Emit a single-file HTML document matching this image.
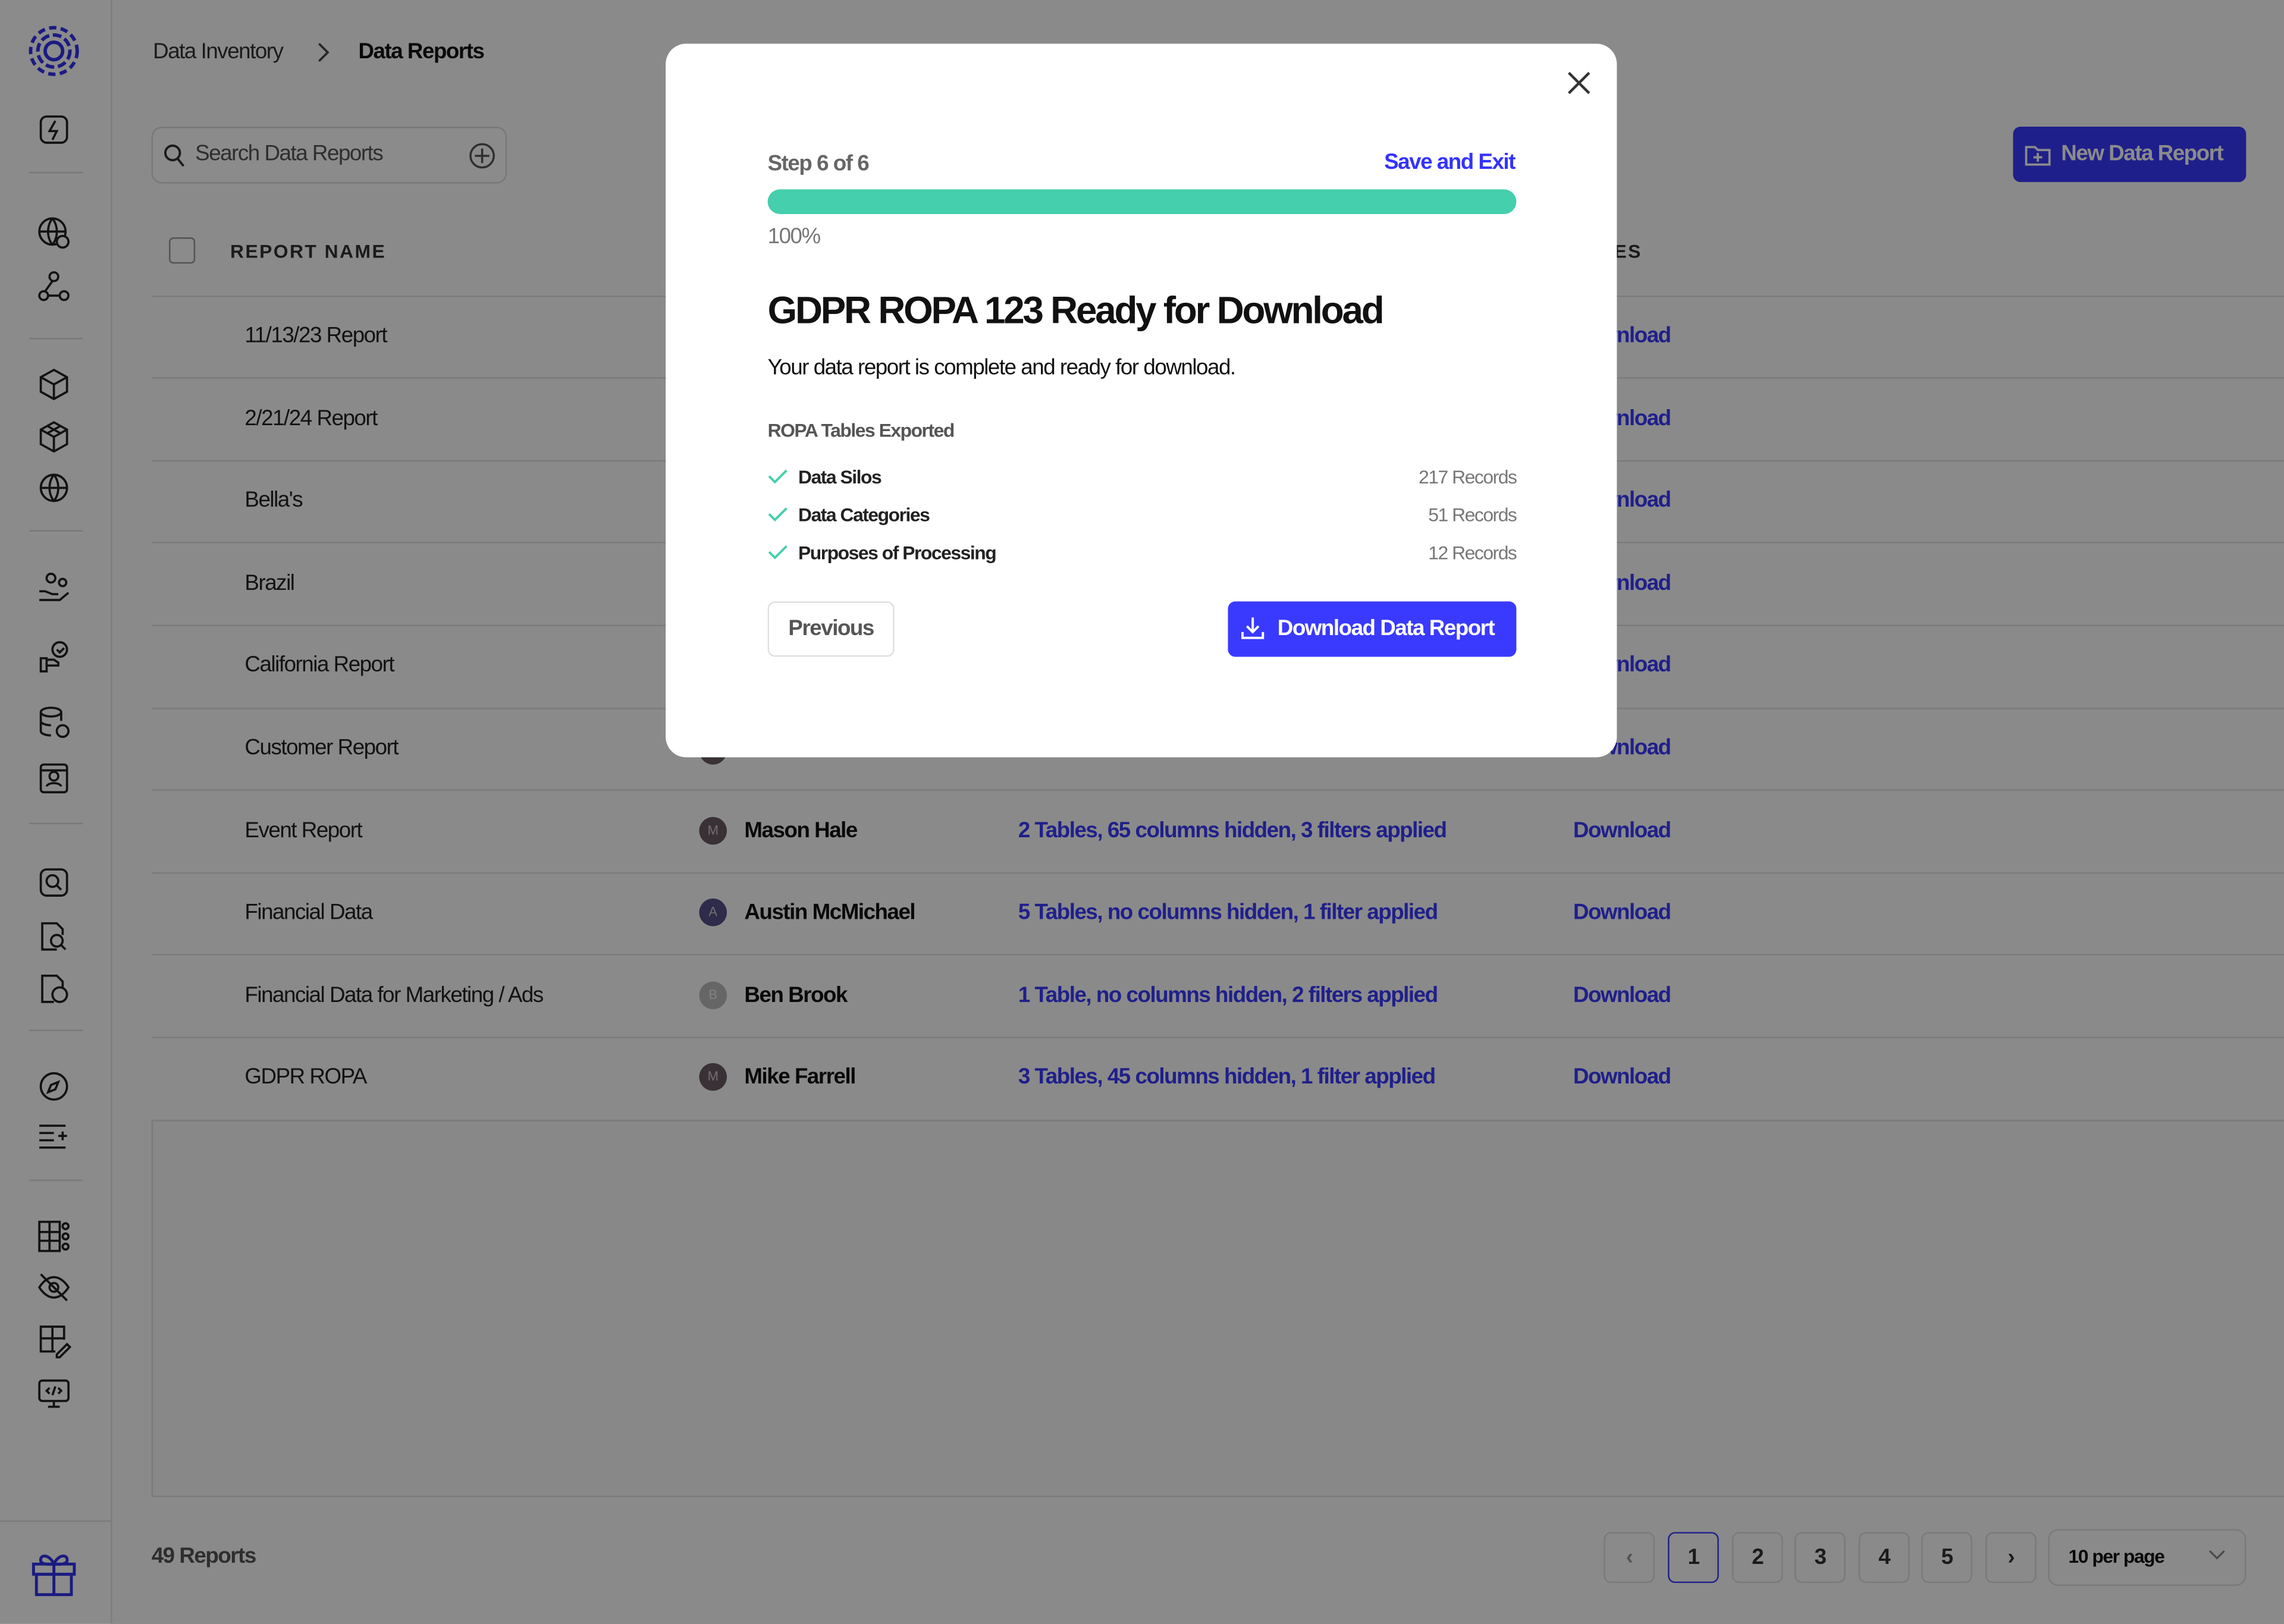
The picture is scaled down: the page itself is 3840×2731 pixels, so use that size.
<!DOCTYPE html>
<html><head><meta charset="utf-8"><style>
*{box-sizing:border-box;margin:0;padding:0}
html,body{width:3840px;height:2731px;overflow:hidden;background:#8a8a8a}
#w{position:absolute;left:0;top:0;width:1568px;height:1115px;transform:scale(2.44898);transform-origin:0 0;font-family:"Liberation Sans",sans-serif;letter-spacing:-0.6px}
.page{position:absolute;inset:0;background:#fdfdfd}
.side{position:absolute;left:0;top:0;width:77px;height:1115px;background:#fff;border-right:1px solid #e4e4e4}
.side svg{position:absolute;left:24px}
.sep{position:absolute;left:20px;width:37px;height:1px;background:#ddd}
.a{position:absolute;white-space:nowrap}
.row{position:absolute;left:104px;width:1464px;height:1px;background:#e2e2e2}
.name{position:absolute;left:168px;font-size:15px;color:#222}
.av{position:absolute;left:480px;width:19px;height:19px;border-radius:50%;background:#6a5a62;color:#ccc;font-size:9px;text-align:center;line-height:19px;letter-spacing:0}
.own{position:absolute;left:511px;font-size:15px;font-weight:bold;color:#111}
.tb{position:absolute;left:699px;font-size:15px;font-weight:bold;color:#3a3aff}
.dl{position:absolute;left:1080px;font-size:15px;font-weight:bold;color:#3a3aff}
.ov{position:absolute;inset:0;background:rgba(0,0,0,0.455)}
.modal{position:absolute;left:457px;top:30px;width:653px;height:490px;background:#fff;border-radius:14px}
.pg{position:absolute;top:1052px;width:35px;height:35px;border:1px solid #e0e0e0;border-radius:5px;font-size:15px;font-weight:bold;text-align:center;line-height:33px;color:#333}
</style></head><body><div id="w">
<div class="page">
 <div class="side">
  <svg style="top:17px;left:19px" width="36" height="36" viewBox="0 0 36 36" fill="none" stroke="#3333ee" stroke-width="2.4"><circle cx="18" cy="18" r="16" stroke-dasharray="5 3"/><circle cx="18" cy="18" r="11" stroke-dasharray="6 2.5"/><circle cx="18" cy="18" r="6"/></svg>
  <svg style="top:76px" width="26" height="26" viewBox="0 0 26 26" fill="none" stroke="#222" stroke-width="1.5"><rect x="4" y="4" width="18" height="18" rx="4"/><path d="M14 7l-4 7h5l-3 6"/></svg>
  <div class="sep" style="top:118px"></div>
  <svg style="top:147px" width="26" height="26" viewBox="0 0 26 26" fill="none" stroke="#222" stroke-width="1.5"><circle cx="12" cy="12" r="9"/><path d="M3 12h18M12 3c-4 5-4 13 0 18M12 3c4 5 4 13 0 18"/><circle cx="19" cy="19" r="4" fill="#fff"/></svg>
  <svg style="top:184px" width="26" height="26" viewBox="0 0 26 26" fill="none" stroke="#222" stroke-width="1.5"><circle cx="13" cy="6" r="3"/><circle cx="6" cy="19" r="3"/><circle cx="20" cy="19" r="3"/><path d="M12 9l-5 7M9 19h8"/></svg>
  <div class="sep" style="top:232px"></div>
  <svg style="top:251px" width="26" height="26" viewBox="0 0 26 26" fill="none" stroke="#222" stroke-width="1.5"><path d="M13 3l9 5v10l-9 5-9-5V8zM4 8l9 5 9-5M13 13v10"/></svg>
  <svg style="top:287px" width="26" height="26" viewBox="0 0 26 26" fill="none" stroke="#222" stroke-width="1.5"><path d="M13 3l9 5v10l-9 5-9-5V8zM4 8l9 5 9-5M13 13v10M8.5 5.5l9 5M17.5 5.5l-9 5"/></svg>
  <svg style="top:322px" width="26" height="26" viewBox="0 0 26 26" fill="none" stroke="#222" stroke-width="1.5"><circle cx="13" cy="13" r="9"/><path d="M4 13h18M13 4c-4 5-4 13 0 18M13 4c4 5 4 13 0 18"/></svg>
  <div class="sep" style="top:364px"></div>
  <svg style="top:391px" width="26" height="26" viewBox="0 0 26 26" fill="none" stroke="#222" stroke-width="1.5"><circle cx="11" cy="6" r="3"/><circle cx="19" cy="9" r="2.5"/><path d="M3 15h4l5 2h4M3 21h14l6-5"/></svg>
  <svg style="top:438px" width="26" height="26" viewBox="0 0 26 26" fill="none" stroke="#222" stroke-width="1.5"><circle cx="17" cy="8" r="5"/><path d="M15 8l2 2 3-3M4 14h4v9H4zM8 15h5l3 2v2H8"/></svg>
  <svg style="top:483px" width="26" height="26" viewBox="0 0 26 26" fill="none" stroke="#222" stroke-width="1.5"><ellipse cx="11" cy="6" rx="7" ry="3"/><path d="M4 6v13c0 2 4 3 7 3M18 6v6M4 12c0 2 4 3 7 3"/><circle cx="19" cy="19" r="4"/></svg>
  <svg style="top:521px" width="26" height="26" viewBox="0 0 26 26" fill="none" stroke="#222" stroke-width="1.5"><rect x="4" y="4" width="18" height="19" rx="2"/><circle cx="13" cy="12" r="3"/><path d="M8 19c1-3 9-3 10 0M4 8h18"/></svg>
  <div class="sep" style="top:565px"></div>
  <svg style="top:593px" width="26" height="26" viewBox="0 0 26 26" fill="none" stroke="#222" stroke-width="1.5"><rect x="4" y="4" width="18" height="18" rx="4"/><circle cx="12" cy="12" r="4"/><path d="M15 15l3 3"/></svg>
  <svg style="top:630px" width="26" height="26" viewBox="0 0 26 26" fill="none" stroke="#222" stroke-width="1.5"><path d="M15 22H5V4h10l4 4v4"/><circle cx="15" cy="16" r="4"/><path d="M18 19l3 3"/></svg>
  <svg style="top:666px" width="26" height="26" viewBox="0 0 26 26" fill="none" stroke="#222" stroke-width="1.5"><path d="M13 22H5V4h10l4 4v4"/><circle cx="17" cy="17" r="5"/></svg>
  <div class="sep" style="top:707px"></div>
  <svg style="top:733px" width="26" height="26" viewBox="0 0 26 26" fill="none" stroke="#222" stroke-width="1.5"><circle cx="13" cy="13" r="9"/><path d="M16 10l-2 5-5 2 2-5z"/></svg>
  <svg style="top:768px" width="26" height="26" viewBox="0 0 26 26" fill="none" stroke="#222" stroke-width="1.5"><path d="M3 5h18M3 10h10M3 15h10M3 20h18M19 9v6M16 12h6"/></svg>
  <div class="sep" style="top:810px"></div>
  <svg style="top:836px" width="26" height="26" viewBox="0 0 26 26" fill="none" stroke="#222" stroke-width="1.5"><rect x="3" y="3" width="14" height="20"/><path d="M3 10h14M3 16h14M10 3v20"/><circle cx="21" cy="6" r="2"/><circle cx="21" cy="13" r="2"/><circle cx="21" cy="20" r="2"/></svg>
  <svg style="top:871px" width="26" height="26" viewBox="0 0 26 26" fill="none" stroke="#222" stroke-width="1.5"><path d="M3 13s4-7 10-7 10 7 10 7-4 7-10 7-10-7-10-7z"/><circle cx="13" cy="13" r="3"/><path d="M4 4l18 18"/></svg>
  <svg style="top:907px" width="26" height="26" viewBox="0 0 26 26" fill="none" stroke="#222" stroke-width="1.5"><path d="M14 21H4V4h16v9M4 12h16M12 4v17M15 23l7-7 2 2-7 7h-2z"/></svg>
  <svg style="top:944px" width="26" height="26" viewBox="0 0 26 26" fill="none" stroke="#222" stroke-width="1.5"><rect x="3" y="4" width="20" height="14" rx="2"/><path d="M9 22h8M13 18v4M10 9l-2 2 2 2M16 9l2 2-2 2M14 8l-2 6"/></svg>
  <div class="sep" style="top:1044px;left:0;width:77px;background:#e4e4e4"></div>
  <svg style="top:1064px;left:20px" width="34" height="34" viewBox="0 0 34 34" fill="none" stroke="#3333ee" stroke-width="2"><rect x="3" y="10" width="28" height="7"/><rect x="5" y="17" width="24" height="14"/><path d="M17 10v21M17 10c-3-7-10-7-9-2 1 3 9 2 9 2zM17 10c3-7 10-7 9-2-1 3-9 2-9 2z"/></svg>
 </div>
 <div class="a" style="left:105px;top:27px;font-size:15px;color:#333">Data Inventory</div>
 <svg class="a" style="left:216px;top:28px" width="12" height="16" viewBox="0 0 12 16" fill="none" stroke="#444" stroke-width="1.5"><path d="M3 2l6 6-6 6"/></svg>
 <div class="a" style="left:246px;top:27px;font-size:15px;font-weight:bold;color:#111">Data Reports</div>
 <div class="a" style="left:104px;top:87px;width:244px;height:39px;border:1px solid #ddd;border-radius:7px;background:#fff"></div>
 <svg class="a" style="left:111px;top:97px" width="18" height="20" viewBox="0 0 18 20" fill="none" stroke="#333" stroke-width="1.6"><circle cx="7.5" cy="8" r="5"/><path d="M11 12l4 5"/></svg>
 <div class="a" style="left:134px;top:97px;font-size:15px;color:#555">Search Data Reports</div>
 <svg class="a" style="left:321px;top:97px" width="20" height="20" viewBox="0 0 20 20" fill="none" stroke="#555" stroke-width="1.4"><circle cx="10" cy="10" r="8"/><path d="M10 5v10M5 10h10"/></svg>
 <div class="a" style="left:1382px;top:87px;width:160px;height:38px;background:#3a3aff;border-radius:5px"></div>
 <svg class="a" style="left:1389px;top:96px" width="20" height="20" viewBox="0 0 20 20" fill="none" stroke="#fff" stroke-width="1.5"><path d="M2 5h6l2 2h8v10H2z M10 9v6M7 12h6"/></svg>
 <div class="a" style="left:1415px;top:97px;font-size:15px;font-weight:bold;color:#fff">New Data Report</div>
 <div class="a" style="left:116px;top:163px;width:18px;height:18px;border:1.5px solid #999;border-radius:3px;background:#fff"></div>
 <div class="a" style="left:158px;top:165px;font-size:13px;font-weight:bold;color:#333;letter-spacing:1px">REPORT NAME</div>
 <div class="a" style="left:1108px;top:165px;font-size:13px;font-weight:bold;color:#333;letter-spacing:1px">ES</div>
 <div class="row" style="top:203px"></div><div class="row" style="top:259px"></div><div class="row" style="top:316px"></div><div class="row" style="top:372px"></div><div class="row" style="top:429px"></div><div class="row" style="top:486px"></div><div class="row" style="top:542px"></div><div class="row" style="top:599px"></div><div class="row" style="top:655px"></div><div class="row" style="top:712px"></div>
 <div class="name" style="top:222px">11/13/23 Report</div><div class="dl" style="top:222px">Download</div>
 <div class="name" style="top:279px">2/21/24 Report</div><div class="dl" style="top:279px">Download</div>
 <div class="name" style="top:335px">Bella's</div><div class="dl" style="top:335px">Download</div>
 <div class="name" style="top:392px">Brazil</div><div class="dl" style="top:392px">Download</div>
 <div class="name" style="top:448px">California Report</div><div class="dl" style="top:448px">Download</div>
 <div class="name" style="top:505px">Customer Report</div><div class="dl" style="top:505px">Download</div><div class="av" style="top:506px">C</div>
 <div class="name" style="top:562px">Event Report</div><div class="av" style="top:561px">M</div><div class="own" style="top:562px">Mason Hale</div><div class="tb" style="top:562px">2 Tables, 65 columns hidden, 3 filters applied</div><div class="dl" style="top:562px">Download</div>
 <div class="name" style="top:618px">Financial Data</div><div class="av" style="top:617px;background:#55508a">A</div><div class="own" style="top:618px">Austin McMichael</div><div class="tb" style="top:618px">5 Tables, no columns hidden, 1 filter applied</div><div class="dl" style="top:618px">Download</div>
 <div class="name" style="top:675px">Financial Data for Marketing / Ads</div><div class="av" style="top:674px;background:#bbb;color:#eee">B</div><div class="own" style="top:675px">Ben Brook</div><div class="tb" style="top:675px">1 Table, no columns hidden, 2 filters applied</div><div class="dl" style="top:675px">Download</div>
 <div class="name" style="top:731px">GDPR ROPA</div><div class="av" style="top:730px">M</div><div class="own" style="top:731px">Mike Farrell</div><div class="tb" style="top:731px">3 Tables, 45 columns hidden, 1 filter applied</div><div class="dl" style="top:731px">Download</div>
 <div class="a" style="left:104px;top:769px;width:1464px;height:259px;background:#f9f9f9;border:1px solid #e0e0e0;border-right:none"></div>
 <div class="a" style="left:104px;top:1060px;font-size:15px;font-weight:bold;color:#555">49 Reports</div>
 <div class="pg" style="left:1101px;color:#999">&lsaquo;</div>
 <div class="pg" style="left:1145px;border:1.5px solid #3a3aff">1</div>
 <div class="pg" style="left:1189px">2</div><div class="pg" style="left:1232px">3</div><div class="pg" style="left:1276px">4</div><div class="pg" style="left:1319px">5</div>
 <div class="pg" style="left:1363px">&rsaquo;</div>
 <div class="a" style="left:1406px;top:1050px;width:136px;height:39px;border:1px solid #e0e0e0;border-radius:7px"></div>
 <div class="a" style="left:1420px;top:1061px;font-size:13px;font-weight:bold;color:#111">10 per page</div>
 <svg class="a" style="left:1515px;top:1062px" width="14" height="12" viewBox="0 0 14 12" fill="none" stroke="#888" stroke-width="1.3"><path d="M2 3l5 5 5-5"/></svg>
</div>
<div class="ov"></div>
<div class="modal">
 <svg class="a" style="left:618px;top:18px" width="18" height="18" viewBox="0 0 18 18" stroke="#333" stroke-width="1.8"><path d="M2 2l14 14M16 2L2 16"/></svg>
 <div class="a" style="left:70px;top:74px;font-size:15px;font-weight:bold;color:#666">Step 6 of 6</div>
 <div class="a" style="right:70px;top:73px;font-size:15px;font-weight:bold;color:#3333ff">Save and Exit</div>
 <div class="a" style="left:70px;top:100px;width:514px;height:17px;border-radius:9px;background:#45cfac"></div>
 <div class="a" style="left:70px;top:124px;font-size:15px;color:#777">100%</div>
 <div class="a" style="left:70px;top:168px;font-size:26px;font-weight:bold;color:#111;letter-spacing:-1.3px">GDPR ROPA 123 Ready for Download</div>
 <div class="a" style="left:70px;top:214px;font-size:15px;color:#111">Your data report is complete and ready for download.</div>
 <div class="a" style="left:70px;top:258px;font-size:13px;font-weight:bold;color:#555">ROPA Tables Exported</div>
 <svg class="a" style="left:70px;top:290px" width="14" height="14" viewBox="0 0 14 14" fill="none" stroke="#45cfac" stroke-width="1.6"><path d="M1 7l4 4 8-8"/></svg>
 <svg class="a" style="left:70px;top:316px" width="14" height="14" viewBox="0 0 14 14" fill="none" stroke="#45cfac" stroke-width="1.6"><path d="M1 7l4 4 8-8"/></svg>
 <svg class="a" style="left:70px;top:342px" width="14" height="14" viewBox="0 0 14 14" fill="none" stroke="#45cfac" stroke-width="1.6"><path d="M1 7l4 4 8-8"/></svg>
 <div class="a" style="left:91px;top:290px;font-size:13px;font-weight:bold;color:#222">Data Silos</div>
 <div class="a" style="left:91px;top:316px;font-size:13px;font-weight:bold;color:#222">Data Categories</div>
 <div class="a" style="left:91px;top:342px;font-size:13px;font-weight:bold;color:#222">Purposes of Processing</div>
 <div class="a" style="right:69px;top:290px;font-size:13px;color:#777">217 Records</div>
 <div class="a" style="right:69px;top:316px;font-size:13px;color:#777">51 Records</div>
 <div class="a" style="right:69px;top:342px;font-size:13px;color:#777">12 Records</div>
 <div class="a" style="left:70px;top:383px;width:87px;height:38px;border:1px solid #e0e0e0;border-radius:5px;font-size:15px;font-weight:bold;color:#555;text-align:center;line-height:36px">Previous</div>
 <div class="a" style="left:386px;top:383px;width:198px;height:38px;background:#3a3aff;border-radius:5px"></div>
 <svg class="a" style="left:394px;top:392px" width="18" height="18" viewBox="0 0 18 18" fill="none" stroke="#fff" stroke-width="1.6"><path d="M9 2v10M5 8l4 4 4-4M2 12v4h14v-4"/></svg>
 <div class="a" style="left:420px;top:393px;font-size:15px;font-weight:bold;color:#fff">Download Data Report</div>
</div>
</div></body></html>
